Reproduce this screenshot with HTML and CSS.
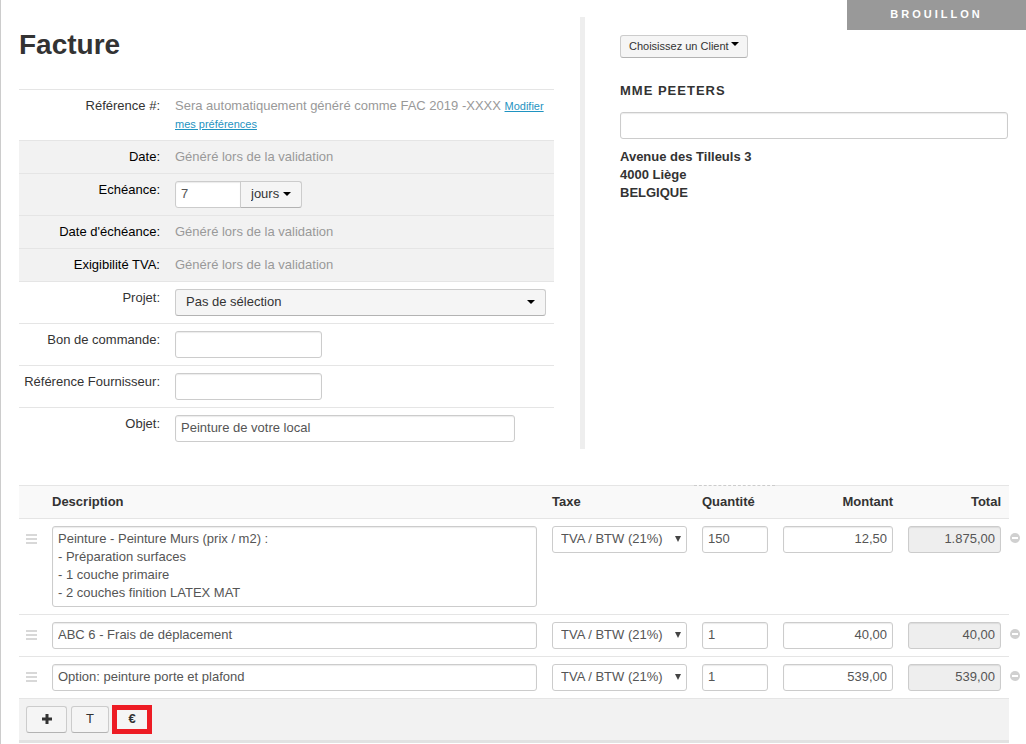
FILE: index.html
```html
<!DOCTYPE html>
<html lang="fr">
<head>
<meta charset="utf-8">
<title>Facture</title>
<link rel="stylesheet" href="styles.css">
</head>
<body>
<main class="page">
  <div class="status">Brouillon</div>

  <div class="top">
    <section class="invoice">
      <h1 class="title">Facture</h1>
      <table class="details">
        <tr><th scope="row">Référence #:</th><td class="muted">Sera automatiquement généré comme FAC 2019 -XXXX <a class="pref" href="#">Modifier mes préférences</a></td></tr>
        <tr class="shaded"><th scope="row">Date:</th><td class="muted">Généré lors de la validation</td></tr>
        <tr class="shaded"><th scope="row"><label for="due">Echéance:</label></th><td>
          <div class="group">
            <input class="field field-due" id="due" value="7">
            <span class="pick pick-unit"><select class="select" aria-label="Unité"><option>jours</option></select></span>
          </div></td></tr>
        <tr class="shaded"><th scope="row">Date d'échéance:</th><td class="muted">Généré lors de la validation</td></tr>
        <tr class="shaded"><th scope="row">Exigibilité TVA:</th><td class="muted">Généré lors de la validation</td></tr>
        <tr><th scope="row"><label for="project">Projet:</label></th><td><span class="pick"><select class="select" id="project"><option>Pas de sélection</option></select></span></td></tr>
        <tr><th scope="row"><label for="order">Bon de commande:</label></th><td><input class="field field-short" id="order"></td></tr>
        <tr><th scope="row"><label for="supplier">Référence Fournisseur:</label></th><td><input class="field field-short" id="supplier"></td></tr>
        <tr><th scope="row"><label for="subject">Objet:</label></th><td><input class="field field-long" id="subject" value="Peinture de votre local"></td></tr>
      </table>
    </section>

    <section class="client">
      <button class="btn btn-small" type="button">Choisissez un Client <span class="caret"></span></button>
      <h2 class="client-name">Mme Peeters</h2>
      <input class="field" aria-label="Complément de nom">
      <address class="address">Avenue des Tilleuls 3<br>4000 Liège<br>BELGIQUE</address>
    </section>
  </div>

  <table class="items">
    <colgroup><col class="c-handle"><col><col class="c-tax"><col class="c-qty"><col class="c-amount"><col class="c-total"><col class="c-remove"></colgroup>
    <thead>
      <tr><th></th><th>Description</th><th>Taxe</th><th class="qty-head">Quantité</th><th class="num">Montant</th><th class="num total">Total</th><td class="remove"></td></tr>
    </thead>
    <tbody>
      <tr>
        <td class="handle"><svg class="grip" viewBox="0 0 11 10"><path d="M0 1h11M0 5h11M0 9h11"/></svg></td>
        <td><textarea class="field area" rows="4" aria-label="Description">Peinture - Peinture Murs (prix / m2) :
- Préparation surfaces
- 1 couche primaire
- 2 couches finition LATEX MAT</textarea></td>
        <td><span class="pick pick-tax"><select class="select" aria-label="Taxe"><option>TVA / BTW (21%)</option></select></span></td>
        <td><input class="field" aria-label="Quantité" value="150"></td>
        <td><input class="field num" aria-label="Montant" value="12,50"></td>
        <td class="total"><input class="field num" aria-label="Total" value="1.875,00" readonly></td>
        <td class="remove"><button class="del" type="button" aria-label="Supprimer"><svg viewBox="0 0 10 10"><circle cx="5" cy="5" r="5"/><path d="M2 5h6"/></svg></button></td>
      </tr>
      <tr>
        <td class="handle"><svg class="grip" viewBox="0 0 11 10"><path d="M0 1h11M0 5h11M0 9h11"/></svg></td>
        <td><input class="field" aria-label="Description" value="ABC 6 - Frais de déplacement"></td>
        <td><span class="pick pick-tax"><select class="select" aria-label="Taxe"><option>TVA / BTW (21%)</option></select></span></td>
        <td><input class="field" aria-label="Quantité" value="1"></td>
        <td><input class="field num" aria-label="Montant" value="40,00"></td>
        <td class="total"><input class="field num" aria-label="Total" value="40,00" readonly></td>
        <td class="remove"><button class="del" type="button" aria-label="Supprimer"><svg viewBox="0 0 10 10"><circle cx="5" cy="5" r="5"/><path d="M2 5h6"/></svg></button></td>
      </tr>
      <tr>
        <td class="handle"><svg class="grip" viewBox="0 0 11 10"><path d="M0 1h11M0 5h11M0 9h11"/></svg></td>
        <td><input class="field" aria-label="Description" value="Option: peinture porte et plafond"></td>
        <td><span class="pick pick-tax"><select class="select" aria-label="Taxe"><option>TVA / BTW (21%)</option></select></span></td>
        <td><input class="field" aria-label="Quantité" value="1"></td>
        <td><input class="field num" aria-label="Montant" value="539,00"></td>
        <td class="total"><input class="field num" aria-label="Total" value="539,00" readonly></td>
        <td class="remove"><button class="del" type="button" aria-label="Supprimer"><svg viewBox="0 0 10 10"><circle cx="5" cy="5" r="5"/><path d="M2 5h6"/></svg></button></td>
      </tr>
    </tbody>
    <tfoot>
      <tr><td class="tools" colspan="6">
        <div class="toolbar">
          <button class="btn btn-add" type="button" aria-label="Ajouter"><svg class="plus" viewBox="0 0 10 10"><path d="M5 0v10M0 5h10"/></svg></button>
          <button class="btn btn-tool" type="button">T</button>
          <button class="btn btn-tool btn-marked" type="button">€</button>
        </div>
      </td><td class="remove"></td></tr>
    </tfoot>
  </table>
</main>
</body>
</html>
```
FILE: styles.css
```css
* { box-sizing: border-box; }

body {
  margin: 0;
  background: #fff;
  color: #333;
  font: 13px/18px "Liberation Sans", Arial, sans-serif;
}

.page {
  position: relative;
  min-height: 100vh;
  padding: 17px 0 0 18px;
  border-left: 1px solid #ccc;
}

.status {
  position: absolute;
  top: 0;
  right: 0;
  width: 179px;
  background: #999;
  color: #fff;
  font-size: 11px;
  font-weight: bold;
  line-height: 28px;
  padding-bottom: 2px;
  letter-spacing: 3px;
  text-align: center;
  text-transform: uppercase;
}

.top {
  display: grid;
  grid-template-columns: minmax(0, 566fr) minmax(0, 388fr);
  gap: 35px;
  margin: 0 18px 36px 0;
}

.invoice {
  padding: 14px 26px 0 0;
  border-right: 5px solid #eee;
}

.title {
  margin: 0 0 30px;
  font-size: 28px;
  line-height: 28px;
}

table {
  width: 100%;
  border-collapse: separate;
  border-spacing: 0;
}

.details th,
.details td {
  padding: 7px 8px 7px 7px;
  border-top: 1px solid #e5e5e5;
  vertical-align: top;
}

.details th {
  width: 149px;
  padding-left: 0;
  font-weight: normal;
  text-align: right;
  white-space: nowrap;
}

.details .shaded { background: #f2f2f2; }
.shaded th { color: #000; }
.details .muted { color: #999; }

.pref {
  color: #1f93c1;
  font-size: 11px;
}

.field,
.select {
  display: block;
  width: 100%;
  height: 27px;
  margin: 0;
  padding: 2px 5px 5px;
  border: 1px solid #ccc;
  border-radius: 3px;
  background: #fff;
  color: #555;
  font: inherit;
}

.field { box-shadow: inset 0 1px 1px rgba(0, 0, 0, .08); }
.field[readonly] { background: #eee; }
.field-short { width: 147px; }
.field-long { width: 340px; }

.field-due {
  width: 66px;
  border-radius: 3px 0 0 3px;
}

.area {
  height: 81px;
  padding-top: 3px;
  resize: none;
  overflow: hidden;
}

.group { display: flex; }

.pick {
  position: relative;
  display: block;
}

.select {
  appearance: none;
  padding: 3px 10px 4px;
  border-bottom-color: #b3b3b3;
  background: #f5f5f5;
  color: #333;
}

.pick::after {
  content: "";
  position: absolute;
  top: 11px;
  right: 11px;
  border: 4px solid transparent;
  border-top-color: #000;
  border-bottom: 0;
  pointer-events: none;
}

.pick-unit {
  width: 62px;
  margin-left: -1px;
}

.pick-unit .select { border-radius: 0 3px 3px 0; }

.pick-tax .select {
  padding: 3px 8px 4px;
  border-color: #ccc;
  background: #fff;
  color: #555;
}

.pick-tax::after {
  top: 10px;
  right: 6px;
  border-width: 6px 3px 0;
  border-top-color: #444;
}

.btn {
  display: inline-flex;
  align-items: center;
  justify-content: center;
  height: 27px;
  padding: 0 0 2px;
  border: 1px solid #ccc;
  border-bottom-color: #b3b3b3;
  border-radius: 3px;
  background: #f5f5f5;
  color: #333;
  font: inherit;
}

.btn-small {
  gap: 2px;
  height: 23px;
  padding: 0 8px 2px;
  font-size: 11px;
}

.caret {
  margin-bottom: 3px;
  border: 4px solid transparent;
  border-top-color: #000;
  border-bottom: 0;
}

.client { padding-top: 18px; }

.client-name {
  margin: 24px 0 12px;
  font-size: 13px;
  line-height: 18px;
  letter-spacing: 1px;
  text-transform: uppercase;
}

.address {
  margin-top: 9px;
  font-style: normal;
  font-weight: bold;
}

.items { table-layout: fixed; }
.c-handle { width: 25px; }
.c-tax { width: 150px; }
.c-qty { width: 81px; }
.c-amount { width: 125px; }
.c-total { width: 109px; }
.c-remove { width: 17px; }

.items th,
.items td {
  padding: 7px 7px 7px 8px;
  border-top: 1px solid #e5e5e5;
  text-align: left;
  vertical-align: top;
}

.items th { background: #f9f9f9; }
.items th.qty-head { border-top: 1px dashed #ccc; }
.items .num { text-align: right; }
.items .total { padding-right: 8px; }
.items .handle { padding: 7px; }

.items .remove {
  padding: 7px 0;
  border: 0;
}

.grip {
  display: block;
  width: 11px;
  height: 10px;
  margin-top: 8px;
  stroke: #d8d8d8;
  stroke-width: 2;
}

.del {
  display: block;
  width: 10px;
  height: 10px;
  margin: 8px 0 0 1px;
  padding: 0;
  border: 0;
  background: none;
}

.del svg {
  display: block;
  width: 10px;
  height: 10px;
  fill: #d0d0d0;
  stroke: none;
}

.del path {
  stroke: #fff;
  stroke-width: 2;
}

.items .tools {
  padding: 7px;
  border-bottom: 3px solid #e2e2e2;
  background: #f2f2f2;
}

.toolbar {
  display: flex;
  gap: 4px;
}

.btn-add { width: 41px; }
.btn-tool { width: 38px; }

.btn-marked {
  border-radius: 0;
  outline: 5px solid #ed1c24;
  outline-offset: -4px;
  font-weight: bold;
}

.plus {
  width: 10px;
  height: 10px;
  stroke: #333;
  stroke-width: 3;
}
```
